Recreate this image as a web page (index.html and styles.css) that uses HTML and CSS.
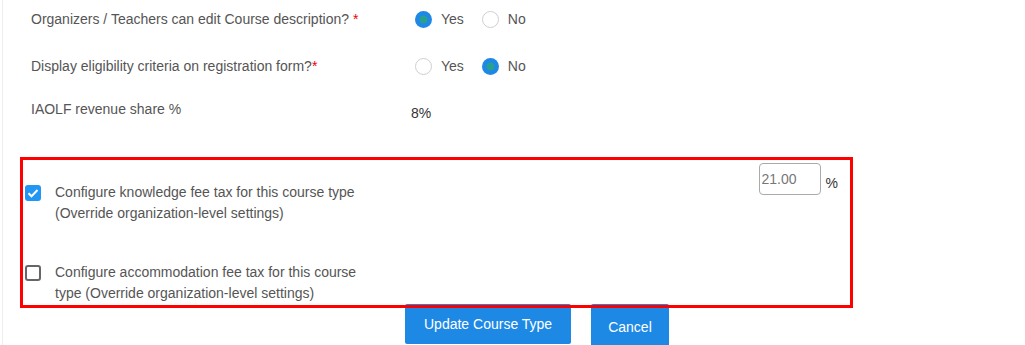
FILE: index.html
```html
<!DOCTYPE html>
<html lang="en">
<head>
  <meta charset="UTF-8">
  <meta name="viewport" content="width=device-width, initial-scale=1.0">
  <title>Edit Course Type</title>
  <link rel="stylesheet" href="styles.css">
</head>
<body>
  <div class="page">
    <div class="settings">
      <div class="field-row">
        <div class="field-label">Organizers / Teachers can edit Course description? <span class="req">*</span></div>
        <div class="radio-group">
          <label class="radio-option"><input type="radio" name="editDesc" checked> Yes</label>
          <label class="radio-option"><input type="radio" name="editDesc"> No</label>
        </div>
      </div>
      <div class="field-row">
        <div class="field-label">Display eligibility criteria on registration form?<span class="req">*</span></div>
        <div class="radio-group">
          <label class="radio-option"><input type="radio" name="eligibility"> Yes</label>
          <label class="radio-option"><input type="radio" name="eligibility" checked> No</label>
        </div>
      </div>
      <div class="field-row">
        <div class="field-label">IAOLF revenue share %</div>
        <div class="field-value">8%</div>
      </div>
    </div>

    <div class="tax-box">
      <div class="tax-row">
        <label class="tax-check">
          <input type="checkbox" checked>
          <span>Configure knowledge fee tax for this course type (Override organization-level settings)</span>
        </label>
        <div class="tax-input">
          <input type="text" value="21.00">
          <span class="pct">%</span>
        </div>
      </div>
      <div class="tax-row second">
        <label class="tax-check">
          <input type="checkbox">
          <span>Configure accommodation fee tax for this course type (Override organization-level settings)</span>
        </label>
      </div>
    </div>

    <div class="actions">
      <button class="btn btn-update">Update Course Type</button>
      <button class="btn btn-cancel">Cancel</button>
    </div>
  </div>
</body>
</html>
```

FILE: styles.css
```css
body {
  margin: 0;
  padding: 0;
  background: #fff;
  font-family: "Liberation Sans", Arial, sans-serif;
  font-size: 14px;
  color: #555;
  overflow: hidden;
}
.page {
  margin-left: 2px;
  border-left: 1px solid #eeeeee;
  height: 345px;
}
.settings {
  padding: 9px 0 0 28px;
}
.field-row {
  display: flex;
  align-items: center;
  height: 20px;
  margin-bottom: 27px;
}
.field-row:nth-child(2) {
  margin-bottom: 23px;
}
.field-row:last-child {
  margin-bottom: 0;
}
.field-label {
  width: 380px;
  line-height: 20px;
}
.req { color: #e00; }
.field-value {
  color: #333;
  margin-top: 8px;
}
.radio-group {
  display: flex;
  align-items: center;
  margin-left: 4px;
}
.radio-option {
  display: flex;
  align-items: center;
  gap: 9px;
  margin-right: 18px;
  cursor: pointer;
}
.radio-option input {
  appearance: none;
  -webkit-appearance: none;
  margin: 0;
  width: 17px;
  height: 17px;
  border: 1px solid #cfcfcf;
  border-radius: 50%;
  background: #fff;
}
.radio-option input:checked {
  border: none;
  background: radial-gradient(circle, #27a08e 0 3.6px, #1e88e5 4.2px);
}
.tax-box {
  position: relative;
  z-index: 1;
  margin: 38px 0 0 17px;
  width: 825px;
  height: 145px;
  border: 3px solid #ff0000;
  padding-left: 2px;
}
.tax-row {
  display: flex;
  align-items: flex-start;
}
.tax-check {
  display: flex;
  align-items: flex-start;
  gap: 14px;
  margin-top: 22px;
  line-height: 21px;
  cursor: pointer;
}
.tax-check span { width: 305px; }
.tax-row.second .tax-check { margin-top: 38px; }
.tax-check input {
  appearance: none;
  -webkit-appearance: none;
  flex: none;
  margin: 3px 0 0 0;
  width: 16px;
  height: 16px;
  border: 2px solid #666;
  border-radius: 3px;
  background: #fff;
}
.tax-check input:checked {
  border: none;
  background: #2196f3 url("data:image/svg+xml,%3Csvg xmlns='http://www.w3.org/2000/svg' viewBox='0 0 16 16'%3E%3Cpath d='M3.5 8.2l3 3 6-6.2' fill='none' stroke='white' stroke-width='2'/%3E%3C/svg%3E") center/16px no-repeat;
}
.tax-input {
  display: flex;
  align-items: flex-start;
  margin-left: auto;
  margin-right: 12px;
  margin-top: 3px;
}
.tax-input input {
  box-sizing: border-box;
  width: 62px;
  height: 32px;
  border: 1px solid #aaa;
  border-radius: 4px;
  padding: 0 2px;
  font-family: inherit;
  font-size: 14px;
  color: #777;
}
.pct {
  color: #333;
  margin: 12px 0 0 5px;
}
.actions {
  display: flex;
  align-items: flex-start;
  gap: 20px;
  margin: -4px 0 0 402px;
}
.btn {
  border: none;
  border-radius: 2px;
  background: #1e88e5;
  color: #fff;
  font-family: inherit;
  font-size: 14px;
  line-height: 16px;
  cursor: pointer;
}
.btn-update { padding: 12px 19px; }
.btn-cancel { padding: 15px 17px 16px; }
```
